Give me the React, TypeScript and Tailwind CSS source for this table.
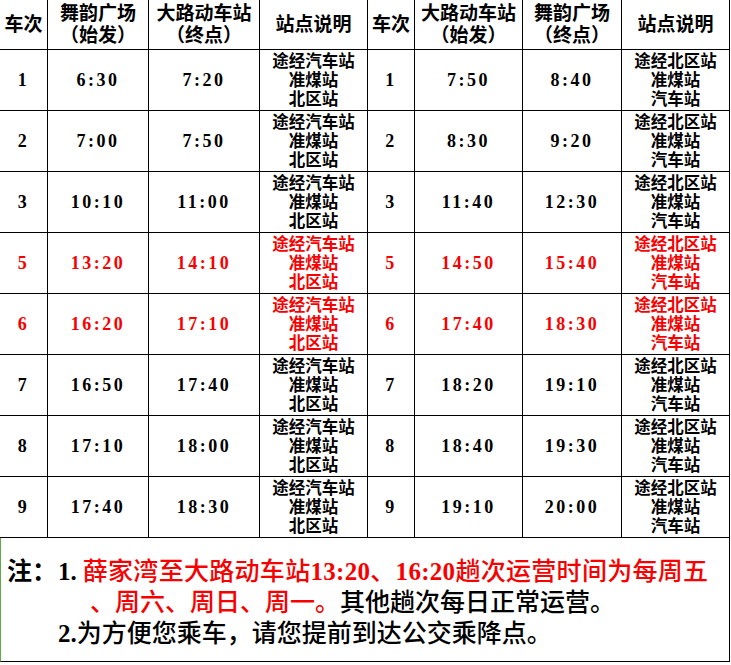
import React from 'react';

type Row = {
  no: string;
  go: [string, string];
  back: [string, string];
  red?: boolean;
};

const rows: Row[] = [
  { no: '1', go: ['6:30', '7:20'], back: ['7:50', '8:40'] },
  { no: '2', go: ['7:00', '7:50'], back: ['8:30', '9:20'] },
  { no: '3', go: ['10:10', '11:00'], back: ['11:40', '12:30'] },
  { no: '5', go: ['13:20', '14:10'], back: ['14:50', '15:40'], red: true },
  { no: '6', go: ['16:20', '17:10'], back: ['17:40', '18:30'], red: true },
  { no: '7', go: ['16:50', '17:40'], back: ['18:20', '19:10'] },
  { no: '8', go: ['17:10', '18:00'], back: ['18:40', '19:30'] },
  { no: '9', go: ['17:40', '18:30'], back: ['19:10', '20:00'] },
];

const goStops = ['途经汽车站', '准煤站', '北区站'];
const backStops = ['途经北区站', '准煤站', '汽车站'];

// widths include each cell's right border line
const cols = 'grid-cols-[48px_101px_111px_108px_47px_108px_99px_108px]';

function Head({ lines }: { lines: string[] }) {
  return (
    <div className="flex flex-col items-center justify-center border-r border-b border-black text-[19px] leading-[22px] font-bold">
      {lines.map((l) => (
        <span key={l}>{l}</span>
      ))}
    </div>
  );
}

function Cell({ children, red }: { children: React.ReactNode; red?: boolean }) {
  return (
    <div
      className={`flex items-center justify-center border-r border-b border-black font-bold text-[18px] tracking-[2.5px] ${
        red ? 'text-[#f80000]' : 'text-black'
      }`}
    >
      {children}
    </div>
  );
}

function Stops({ items, red }: { items: string[]; red?: boolean }) {
  return (
    <div
      className={`flex flex-col items-center justify-center border-r border-b border-black text-[16.5px] leading-[19px] font-bold ${
        red ? 'text-[#f80000]' : 'text-black'
      }`}
    >
      {items.map((s) => (
        <span key={s}>{s}</span>
      ))}
    </div>
  );
}

export default function App() {
  return (
    <div
      className="w-[731px] h-[665px] bg-white text-black overflow-hidden"
      style={{ fontFamily: '"Liberation Serif", "Noto Sans CJK SC", serif' }}
    >
      <div className={`grid ${cols} grid-rows-[50px_repeat(8,61px)] w-[730px]`}>
        <Head lines={['车次']} />
        <Head lines={['舞韵广场', '（始发）']} />
        <Head lines={['大路动车站', '（终点）']} />
        <Head lines={['站点说明']} />
        <Head lines={['车次']} />
        <Head lines={['大路动车站', '（始发）']} />
        <Head lines={['舞韵广场', '（终点）']} />
        <Head lines={['站点说明']} />

        {rows.map((r) => (
          <React.Fragment key={r.no}>
            <Cell red={r.red}>{r.no}</Cell>
            <Cell red={r.red}>{r.go[0]}</Cell>
            <Cell red={r.red}>{r.go[1]}</Cell>
            <Stops items={goStops} red={r.red} />
            <Cell red={r.red}>{r.no}</Cell>
            <Cell red={r.red}>{r.back[0]}</Cell>
            <Cell red={r.red}>{r.back[1]}</Cell>
            <Stops items={backStops} red={r.red} />
          </React.Fragment>
        ))}
      </div>

      <div className="w-[730px] h-[124px] border-l border-l-[#5fa84a] border-r border-b border-black pt-[18px] text-[25px] leading-[31px] font-medium">
        <div className="flex pl-[6px]">
          <span className="w-[51px] shrink-0 font-bold">注：</span>
          <div className="flex flex-col">
            <div className="whitespace-nowrap">
              <span className="mr-[6px] font-bold">1.</span>
              <span className="text-[#f80000] tracking-[0.3px]">
                薛家湾至大路动车站<span className="font-bold">13:20</span>、<span className="font-bold">16:20</span>趟次运营时间为每周五
              </span>
            </div>
            <div className="whitespace-nowrap pl-[32px]">
              <span className="text-[#f80000]">、周六、周日、周一。</span>
              <span>其他趟次每日正常运营。</span>
            </div>
            <div className="whitespace-nowrap">
              <span className="font-bold">2.</span>为方便您乘车，请您提前到达公交乘降点。
            </div>
          </div>
        </div>
      </div>
    </div>
  );
}
